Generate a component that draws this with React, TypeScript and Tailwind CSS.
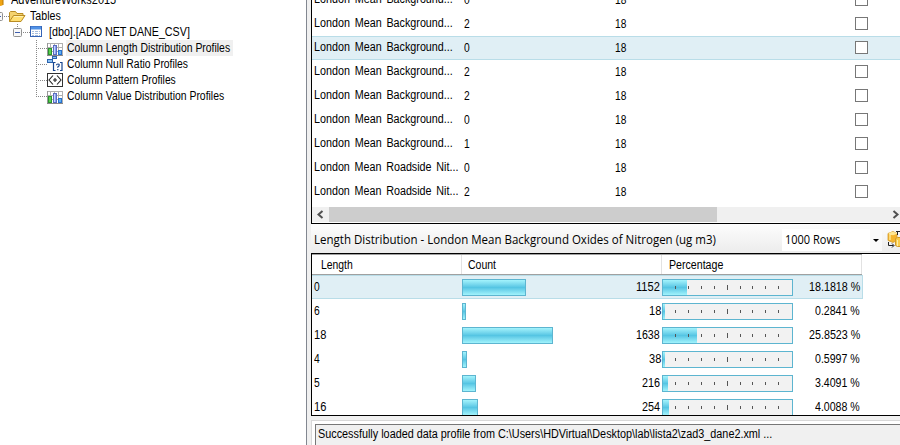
import { useLayoutEffect, useRef, useState } from "react";
import type { ReactNode } from "react";

/** A single line of text, condensed or widened to a given width. */
function Fit({ w, children, className = "" }: { w: number; children: ReactNode; className?: string }) {
  const ref = useRef<HTMLSpanElement>(null);
  const [scale, setScale] = useState(1);
  useLayoutEffect(() => {
    if (ref.current) setScale(w / ref.current.offsetWidth);
  }, [w]);
  return (
    <span className={`block shrink-0 whitespace-pre ${className}`} style={{ width: w }}>
      <span ref={ref} className="inline-block origin-left" style={{ transform: `scaleX(${scale})` }}>
        {children}
      </span>
    </span>
  );
}

function Expander({ x, y }: { x: number; y: number }) {
  return (
    <g>
      <rect x={x + 0.5} y={y + 0.5} width="8" height="8" rx="1" fill="#f8f8f8" stroke="#919191" />
      <path d={`M${x + 2} ${y + 4.5}h5`} stroke="#3f5fae" />
    </g>
  );
}

function ChartIcon() {
  return (
    <g>
      <rect x="47" y="3" width="16" height="12" fill="#fff" />
      <path d="M47 3.5h16M47 7.5h16M47 11.5h16M50.5 3v12M54.5 3v12M58.5 3v12M62.5 3v12" stroke="#b0b0b0" />
      <path d="M47.5 3v12" stroke="#999" />
      <rect x="48.5" y="8.5" width="3" height="6" fill="#5bd04e" stroke="#2a9130" />
      <rect x="53.5" y="5.5" width="3" height="9" fill="#8aa2ee" stroke="#5a6cc0" />
      <path d="M54.5 6v8" stroke="#c5d2ff" />
      <rect x="58.5" y="10.5" width="3" height="4" fill="#5eb0f4" stroke="#2870cc" />
      <path d="M47 15.5h16" stroke="#888" />
    </g>
  );
}

function NullIcon() {
  return (
    <g>
      <rect x="52.5" y="0.5" width="4" height="2" fill="#8cc1f5" stroke="#2d63ad" />
      <rect x="47.5" y="3.5" width="5" height="3" fill="#8cc1f5" stroke="#2d63ad" />
      <path d="M55.5 6.5h-2v8h2M60 6.5h2v8h-2" fill="none" stroke="#17458f" strokeWidth="1.2" />
      <path d="M56.5 9.3q0-1.3 1.4-1.3t1.3 1.2q0 .9-1.4 1.7v.9M57.8 13v1.2" fill="none" stroke="#17458f" strokeWidth="1.2" />
    </g>
  );
}

function PatternIcon() {
  return (
    <g>
      <rect x="47.5" y="1.5" width="15" height="13" fill="#fff" stroke="#333" />
      <path d="M53 3.5l-4 4.5 4 4.5M57 3.5l4 4.5-4 4.5M53 8h4M55 6v4" fill="none" stroke="#222" strokeWidth="1.1" />
    </g>
  );
}

const leaves = [
  { label: "Column Length Distribution Profiles", w: 163, icon: <ChartIcon />, sel: true },
  { label: "Column Null Ratio Profiles", w: 121, icon: <NullIcon /> },
  { label: "Column Pattern Profiles", w: 109, icon: <PatternIcon /> },
  { label: "Column Value Distribution Profiles", w: 157, icon: <ChartIcon />, last: true },
];

function Tree() {
  return (
    <aside className="h-full w-[306px] shrink-0 overflow-hidden bg-white leading-4">
      <div className="-mt-2 flex h-4">
        <svg width="11" height="16" className="shrink-0">
          <path d="M-8 4v8q5 4 11 1V2z" fill="#efa414" />
          <path d="M-3 3v11" stroke="#ffe070" strokeWidth="2" />
          <path d="M3 2v11" stroke="#b87900" />
        </svg>
        <Fit w={105}>AdventureWorks2015</Fit>
      </div>
      <div className="flex h-4">
        <svg width="30" height="16" className="shrink-0">
          <Expander x={-6} y={4} />
          <path d="M4 8.5h5" stroke="#888" strokeDasharray="1 1" />
          <path d="M9.5 13.5v-9l1-1h5l1.5 2h6v3" fill="#f5d36e" stroke="#b98c24" />
          <path d="M9.5 13.5l4-6h11.5l-4 6z" fill="#ffdf72" stroke="#b98c24" />
          <path d="M14 8.5h9" stroke="#fff2b5" />
        </svg>
        <Fit w={31}>Tables</Fit>
      </div>
      <div className="flex h-4">
        <svg width="49" height="16" className="shrink-0">
          <path d="M17.5 0v4M23 8.5h7" stroke="#888" strokeDasharray="1 1" />
          <Expander x={13} y={4} />
          <rect x="30.5" y="2.5" width="11" height="10" fill="#fff" stroke="#3564b6" />
          <path d="M31 4h10" stroke="#4f91e6" strokeWidth="3" />
          <path d="M32 7.5h8M32 9.5h8M32 11.5h8" stroke="#a4bddf" />
          <path d="M34.5 6v6M38.5 6v6" stroke="#fff" />
        </svg>
        <Fit w={141}>[dbo].[ADO NET DANE_CSV]</Fit>
      </div>
      {leaves.map((l) => (
        <div key={l.label} className="flex h-4">
          <svg width="66" height="16" className="shrink-0">
            <path d={l.last ? "M36.5 0v9M36 8.5h11" : "M36.5 0v16M36 8.5h11"} stroke="#888" strokeDasharray="1 1" fill="none" />
            {l.icon}
          </svg>
          <div className={l.sel ? "bg-[#f0f0f0] pr-[3px] pl-px" : "pl-px"}>
            <Fit w={l.w}>{l.label}</Fit>
          </div>
        </div>
      ))}
    </aside>
  );
}

const B = { name: "London Mean Background...", w: 139 };
const R = { name: "London Mean Roadside Nit...", w: 144 };
const columns = [
  { ...B, v: "0" },
  { ...B, v: "2" },
  { ...B, v: "0", sel: true },
  { ...B, v: "2" },
  { ...B, v: "2" },
  { ...B, v: "0" },
  { ...B, v: "1" },
  { ...R, v: "0" },
  { ...R, v: "2" },
];

function ColumnGrid() {
  return (
    <div className="flex h-[223px] shrink-0 flex-col overflow-hidden border-l border-black bg-white">
      <div className="-mt-3 h-[219px] shrink-0">
        {columns.map((c, i) => (
          <div
            key={i}
            className={`flex h-6 border-y pl-0.5 leading-[22px] ${c.sel ? "border-[#b9dde8] bg-[#e0eff5]" : "border-transparent"}`}
          >
            <div className="-mt-px w-[150px]">
              <Fit w={c.w} className="[word-spacing:2px]">{c.name}</Fit>
            </div>
            <div className="w-[151px]">
              <Fit w={6}>{c.v}</Fit>
            </div>
            <div className="w-[240px]">
              <Fit w={11}>18</Fit>
            </div>
            <div className="mt-1 size-[13px] border border-[#777] bg-white" />
          </div>
        ))}
      </div>
      <div className="flex h-[15px] shrink-0 bg-[#f0f0f0]">
        <svg width="17" height="15">
          <path d="M10.5 4l-4 3.5 4 3.5" fill="none" stroke="#505050" strokeWidth="2" />
        </svg>
        <div className="w-[388px] bg-[#cdcdcd]" />
        <div className="grow" />
        <svg width="10" height="15">
          <path d="M3.5 4l4 3.5-4 3.5" fill="none" stroke="#505050" strokeWidth="2" />
        </svg>
      </div>
    </div>
  );
}

function Toolbar() {
  return (
    <div className="flex h-[31px] shrink-0 items-center border-y border-black bg-linear-to-b from-[#fdfdfd] to-[#ececec] pl-[3px] font-['Open_Sans','Noto_Sans',sans-serif] text-[12px] leading-[29px]">
      <div className="w-[468px] pt-0.5">
        <Fit w={402}>Length Distribution - London Mean Background Oxides of Nitrogen (ug m3)</Fit>
      </div>
      <div className="mt-0.5 flex h-[22px] w-[100px] items-center bg-white pl-[3px] leading-[18px]">
        <Fit w={55}>1000 Rows</Fit>
        <div className="grow" />
        <svg width="12" height="22" className="bg-[#fafafa]">
          <path d="M3 10h6l-3 3z" fill="#000" />
        </svg>
      </div>
      <svg width="13" height="18" className="ml-[5px]">
        <path d="M1 3.5l5-2 4 2v7l-4 2-5-2z" fill="#f5b52e" stroke="#d09a2c" strokeWidth=".8" />
        <path d="M3 4v6M2 3.5l4-1 3 1-3 1z" stroke="#ffe895" strokeWidth="1.4" fill="#ffe895" />
        <path d="M9 1.5h4M10.5 2v3M1.5 12v3.5h5M5 13.5l2 2-2 2" fill="none" stroke="#222" />
        <path d="M8.5 8.5l2-1H14v9h-3.5l-2-1z" fill="#f9cc4c" stroke="#d09a2c" />
        <path d="M10.5 10v6" stroke="#ffeea5" />
      </svg>
    </div>
  );
}

const lengths = [
  { len: "0", bar: 64, count: "1152", fill: 24, pct: "18.1818 %", pw: 51, sel: true },
  { len: "6", bar: 4, count: "18", fill: 2, pct: "0.2841 %", pw: 45 },
  { len: "18", bar: 91, count: "1638", fill: 34, pct: "25.8523 %", pw: 51 },
  { len: "4", bar: 5, count: "38", fill: 2, pct: "0.5997 %", pw: 45 },
  { len: "5", bar: 14, count: "216", fill: 5, pct: "3.4091 %", pw: 45 },
  { len: "16", bar: 16, count: "254", fill: 6, pct: "4.0088 %", pw: 45 },
];
const ticks = [12, 25, 38, 51, 64, 77, 89, 102, 115];
const shade = "bg-linear-to-b from-[#a3f3fc] via-[#55c5e3] to-[#a0f3fc]";

function LengthGrid() {
  return (
    <div className="h-[162px] shrink-0 overflow-hidden border-b border-l border-black bg-white">
      <div className="flex h-[21px] w-[550px] border-y border-[#a0a0a0] leading-5">
        <div className="w-[150px] border-r border-[#e2e2e2] pl-[9px]"><Fit w={32}>Length</Fit></div>
        <div className="w-[200px] border-r border-[#e2e2e2] pl-[6px]"><Fit w={28}>Count</Fit></div>
        <div className="w-[200px] border-r border-[#e2e2e2] pl-[7px]"><Fit w={54}>Percentage</Fit></div>
      </div>
      {lengths.map((r) => (
        <div
          key={r.len}
          className={`flex h-6 w-[551px] border-y border-r leading-[22px] ${r.sel ? "border-[#b9dde8] bg-[#e0eff5]" : "border-transparent"}`}
        >
          <div className="w-[150px] pl-0.5"><Fit w={r.len.length * 6}>{r.len}</Fit></div>
          <div className="flex w-[200px] justify-between pt-[3px]">
            <div className={`h-[17px] border border-[#5db5d0] ${shade}`} style={{ width: r.bar }} />
            <Fit w={r.count.length * 6} className={`-mt-[3px] ${r.count.length > 2 ? "mr-0.5" : "mr-px"}`}>{r.count}</Fit>
          </div>
          <div className="mt-[3px] h-[17px] w-[131px] border border-[#5db5d0] bg-[#f2f2f2]">
            <div className="grid h-full">
              <div className={`col-start-1 row-start-1 h-full ${shade}`} style={{ width: r.fill }} />
              <svg width="129" height="15" className="col-start-1 row-start-1">
                {ticks.map((x) => (
                  <path key={x} d={x === 64 ? `M${x + 0.5} 5v5` : `M${x + 0.5} 6v3`} stroke="#555" />
                ))}
              </svg>
            </div>
          </div>
          <div className="flex grow justify-end pr-[2px]"><Fit w={r.pw}>{r.pct}</Fit></div>
        </div>
      ))}
    </div>
  );
}

export default function App() {
  return (
    <div className="flex h-[445px] w-[900px] overflow-hidden bg-[#f0f0f0] font-['Liberation_Sans',Arial,sans-serif] text-[12px] text-black">
      <Tree />
      <div className="w-px shrink-0 bg-[#828790]" />
      <main className="flex h-full min-w-0 grow flex-col pl-1">
        <ColumnGrid />
        <Toolbar />
        <LengthGrid />
        <div className="mt-1 h-[40px] shrink-0 border-t border-l border-[#d8d8d8] bg-white pt-[3px] pl-[3px]">
          <div className="h-[30px] border-t border-l border-[#777] bg-[#f0f0f0] pl-[2px] leading-[19px]">
            <Fit w={454}>{"Successfully loaded data profile from C:\\Users\\HDVirtual\\Desktop\\lab\\lista2\\zad3_dane2.xml ..."}</Fit>
          </div>
        </div>
      </main>
    </div>
  );
}
